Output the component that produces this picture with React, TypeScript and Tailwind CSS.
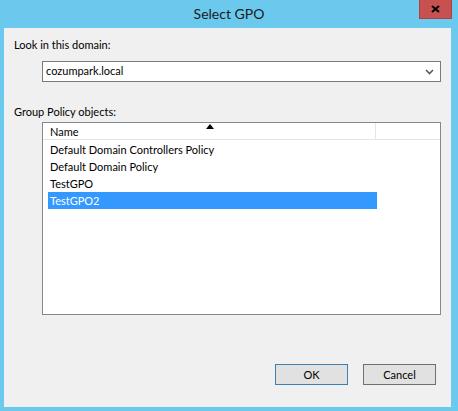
import React, {useState} from "react";

const policies = [
	"Default Domain Controllers Policy",
	"Default Domain Policy",
	"TestGPO",
	"TestGPO2",
];

function SelectGpoDialog() {
	const [selected, setSelected] = useState(3);

	return (
		<div className="w-[458px] h-[411px] bg-[#6bc9ed] flex flex-col text-[11px] text-[#000] [font-family:Lato,'Noto_Sans',sans-serif]">
			{/* title bar */}
			<div className="h-[28px] grid grid-cols-[1fr_auto_1fr] items-start">
				<div/>
				<span className="text-[14px] leading-[28px] text-[#1b1b1b]">Select GPO</span>
				<div className="flex justify-end pr-[6px]">
					<button className="w-[33px] h-[19px] bg-[#c75050] border border-[#a84444] border-t-0 flex items-center justify-center">
						<svg width="9" height="8" viewBox="0 0 9 8">
							<path d="M1 1 L8 7 M8 1 L1 7" stroke="#000" strokeWidth="2"/>
						</svg>
					</button>
				</div>
			</div>

			{/* client area */}
			<div className="ml-[4px] mr-[7px] mb-[4px] flex-1 bg-[#f0f0f0] flex flex-col">
				<label className="mt-[9px] ml-[10px] leading-[16px]">Look in this domain:</label>
				<div className="mt-[8px] ml-[38px] w-[399px] h-[21px] bg-white border border-[#7a7a7a] flex items-center justify-between pl-[3px] pr-[6px]">
					<span>cozumpark.local</span>
					<svg width="9" height="6" viewBox="0 0 9 6">
						<path d="M1 1 L4.5 4.5 L8 1" stroke="#5a5a5a" strokeWidth="1.6" fill="none"/>
					</svg>
				</div>

				<label className="mt-[22px] ml-[10px] leading-[16px]">Group Policy objects:</label>
				<div className="mt-[2px] ml-[38px] w-[399px] h-[193px] bg-white border border-[#828790] flex flex-col">
					{/* column header */}
					<div className="h-[17px] flex border-b border-[#e5e5e5]">
						<div className="w-[333px] relative border-r border-[#e5e5e5] pl-[7px] leading-[17px]">
							Name
							<svg className="absolute left-[163px] top-[1px]" width="8" height="5" viewBox="0 0 8 5">
								<path d="M0 5 L4 0 L8 5 Z" fill="#000"/>
							</svg>
						</div>
						<div className="flex-1"/>
					</div>
					<div className="pt-[1px] pl-[5px]">
						{policies.map((name, i) => (
							<div
								key={name}
								onClick={() => setSelected(i)}
								className={`w-[329px] h-[17px] leading-[17px] pl-[2px] ${i === selected ? "bg-[#3399ff] text-white" : ""}`}>
								{name}
							</div>
						))}
					</div>
				</div>

				<div className="mt-[49px] mr-[15px] flex justify-end gap-[15px]">
					<button className="w-[73px] h-[21px] bg-[#e1e1e1] border border-[#3c7fb1] leading-[19px]">OK</button>
					<button className="w-[73px] h-[21px] bg-[#e1e1e1] border border-[#707070] leading-[19px]">Cancel</button>
				</div>
			</div>
		</div>
	);
}

export default function App() {
	return <SelectGpoDialog/>;
}
